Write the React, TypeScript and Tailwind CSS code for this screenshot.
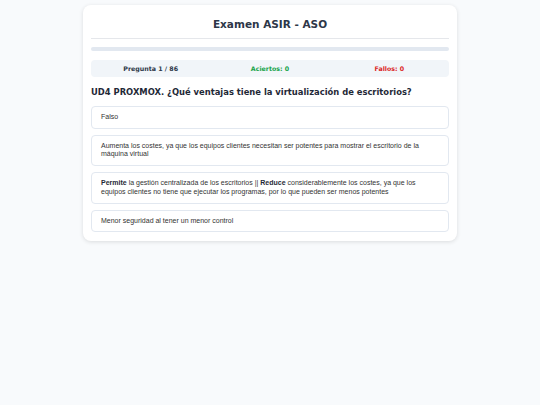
import React from 'react';

const options: React.ReactNode[] = [
  'Falso',
  'Aumenta los costes, ya que los equipos clientes necesitan ser potentes para mostrar el escritorio de la máquina virtual',
  <>
    <b className="text-[#1f2937]">Permite</b> la gestión centralizada de los escritorios || <b className="text-[#1f2937]">Reduce</b> considerablemente los costes, ya que los
    equipos clientes no tiene que ejecutar los programas, por lo que pueden ser menos potentes
  </>,
  'Menor seguridad al tener un menor control',
];

export default function App() {
  return (
    <div className="min-h-[405px] bg-[#f8fafc] pt-[5px]">
      <div className="mx-auto w-[374px] rounded-lg bg-white px-2 pb-[9px] pt-[12px] shadow-[0_1px_4px_rgba(0,0,0,0.12)]">
        <h1 className="border-b border-[#e5e7eb] pb-[6px] text-center font-['DejaVu_Sans',sans-serif] text-[10.5px] font-bold leading-[15px] text-[#2d3748]">
          Examen ASIR - ASO
        </h1>
        <div className="mt-[8px] h-[4px] rounded-full bg-[#e2e8f0]" />
        <div className="mt-[9px] flex h-[17px] items-center rounded bg-[#f1f5f9] font-['DejaVu_Sans',sans-serif] text-[6.3px] font-bold">
          <div className="flex-1 text-center text-[#2d3748]">Pregunta 1 / 86</div>
          <div className="flex-1 text-center text-[#16a34a]">Aciertos: 0</div>
          <div className="flex-1 text-center text-[#dc2626]">Fallos: 0</div>
        </div>
        <h2 className="mt-[9px] font-['DejaVu_Sans',sans-serif] text-[8.4px] font-bold leading-[12px] text-[#1f2937]">
          UD4 PROXMOX. ¿Qué ventajas tiene la virtualización de escritorios?
        </h2>
        <div className="mt-[8px] flex flex-col gap-[6px]">
          {options.map((o, i) => (
            <div
              key={i}
              className="rounded border border-[#e2e8f0] bg-white px-[9px] py-[6px] font-['Liberation_Sans',Arial,sans-serif] text-[7px] leading-[8.7px] text-[#333333]"
            >
              {o}
            </div>
          ))}
        </div>
      </div>
    </div>
  );
}
